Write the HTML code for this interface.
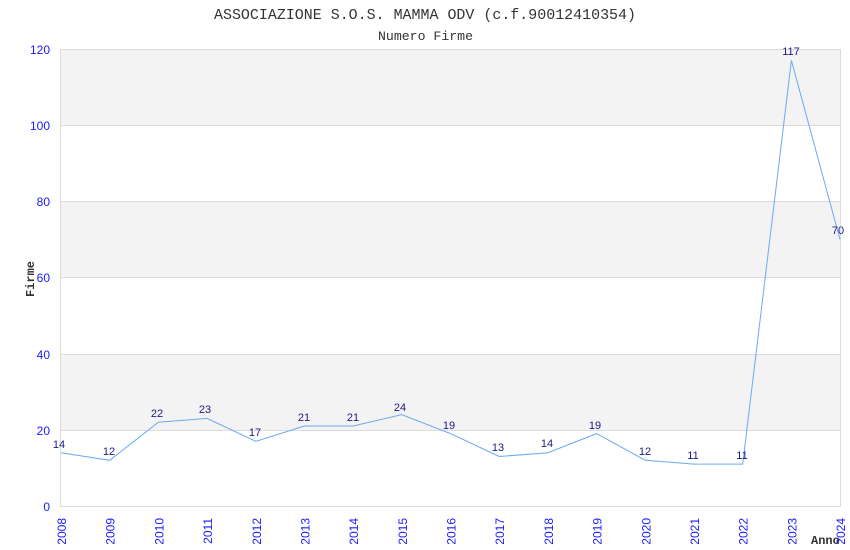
<!DOCTYPE html>
<html><head><meta charset="utf-8"><style>
html,body{margin:0;padding:0;background:#fff;}
svg{display:block;}
</style></head><body>
<svg width="850" height="550" viewBox="0 0 850 550" xmlns="http://www.w3.org/2000/svg">
<text x="425" y="19" font-family="Liberation Mono, monospace" font-size="14.5" fill="#333" text-anchor="middle" textLength="422" lengthAdjust="spacingAndGlyphs">ASSOCIAZIONE S.O.S. MAMMA ODV (c.f.90012410354)</text>
<text x="425.5" y="40" font-family="Liberation Mono, monospace" font-size="13" fill="#333" text-anchor="middle" textLength="95" lengthAdjust="spacingAndGlyphs">Numero Firme</text>
<!-- bands -->
<rect x="61" y="49" width="779" height="76" fill="#f3f3f3"/>
<rect x="61" y="201" width="779" height="76" fill="#f3f3f3"/>
<rect x="61" y="354" width="779" height="76" fill="#f3f3f3"/>
<g stroke="#dcdcdc" stroke-width="1">
<line x1="61" y1="49.5" x2="840" y2="49.5"/>
<line x1="61" y1="125.5" x2="840" y2="125.5"/>
<line x1="61" y1="201.5" x2="840" y2="201.5"/>
<line x1="61" y1="277.5" x2="840" y2="277.5"/>
<line x1="61" y1="354.5" x2="840" y2="354.5"/>
<line x1="61" y1="430.5" x2="840" y2="430.5"/>
<line x1="61" y1="506.5" x2="841" y2="506.5"/>
<line x1="60.5" y1="49" x2="60.5" y2="507"/>
<line x1="840.5" y1="49" x2="840.5" y2="507"/>
</g>
<g font-family="Liberation Sans, sans-serif" font-size="12" fill="#1a1aff" text-anchor="end">
<text x="50" y="54">120</text>
<text x="50" y="130">100</text>
<text x="50" y="206">80</text>
<text x="50" y="282">60</text>
<text x="50" y="359">40</text>
<text x="50" y="435">20</text>
<text x="50" y="511">0</text>
</g>
<text transform="translate(34,297) rotate(-90)" font-family="Liberation Mono, monospace" font-size="12" font-weight="bold" fill="#333">Firme</text>
<text x="811" y="544" font-family="Liberation Mono, monospace" font-size="12" font-weight="bold" fill="#333">Anno</text>
<polyline fill="none" stroke="#6aaaf0" stroke-width="1" points="61,452.7 109.7,460.3 158.4,422.2 207.1,418.4 255.8,441.3 304.4,426 353.1,426 401.8,414.6 450.5,433.6 499.2,456.5 547.9,452.7 596.6,433.6 645.3,460.3 694,464.1 742.7,464.1 791.4,60.4 840,239.4"/>
<g font-family="Liberation Sans, sans-serif" font-size="11" fill="#1a1a80" text-anchor="middle">
<text x="59" y="448">14</text>
<text x="109" y="455">12</text>
<text x="157" y="417">22</text>
<text x="205" y="413">23</text>
<text x="255" y="436">17</text>
<text x="304" y="421">21</text>
<text x="353" y="421">21</text>
<text x="400" y="411">24</text>
<text x="449" y="429">19</text>
<text x="498" y="451">13</text>
<text x="547" y="447">14</text>
<text x="595" y="429">19</text>
<text x="645" y="455">12</text>
<text x="693" y="459">11</text>
<text x="742" y="459">11</text>
<text x="791" y="55">117</text>
<text x="838" y="234">70</text>
</g>
<g font-family="Liberation Sans, sans-serif" font-size="12" fill="#1a1aff" text-anchor="end">
<text transform="translate(66,518) rotate(-90)">2008</text>
<text transform="translate(114.7,518) rotate(-90)">2009</text>
<text transform="translate(163.4,518) rotate(-90)">2010</text>
<text transform="translate(212.1,518) rotate(-90)">2011</text>
<text transform="translate(260.8,518) rotate(-90)">2012</text>
<text transform="translate(309.4,518) rotate(-90)">2013</text>
<text transform="translate(358.1,518) rotate(-90)">2014</text>
<text transform="translate(406.8,518) rotate(-90)">2015</text>
<text transform="translate(455.5,518) rotate(-90)">2016</text>
<text transform="translate(504.2,518) rotate(-90)">2017</text>
<text transform="translate(552.9,518) rotate(-90)">2018</text>
<text transform="translate(601.6,518) rotate(-90)">2019</text>
<text transform="translate(650.3,518) rotate(-90)">2020</text>
<text transform="translate(699,518) rotate(-90)">2021</text>
<text transform="translate(747.7,518) rotate(-90)">2022</text>
<text transform="translate(796.4,518) rotate(-90)">2023</text>
<text transform="translate(845,518) rotate(-90)">2024</text>
</g>
</svg>
</body></html>
